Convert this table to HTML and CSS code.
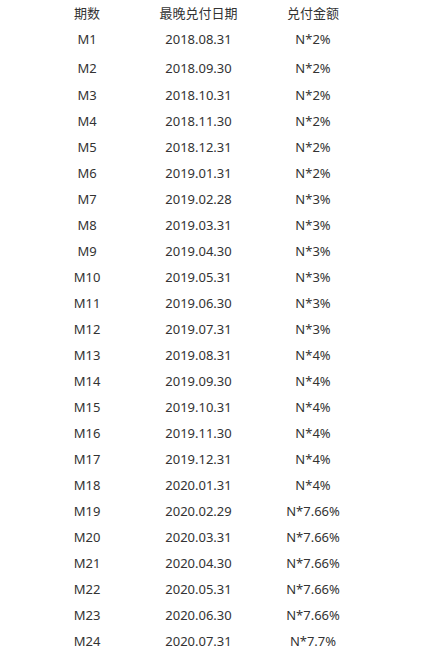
FILE: index.html
```html
<!DOCTYPE html>
<html lang="zh-CN">
<head>
<meta charset="utf-8">
<link rel="stylesheet" href="styles.css">
</head>
<body>
<div class="schedule">
  <div class="row head"><span>期数</span><span>最晚兑付日期</span><span>兑付金额</span></div>
  <div class="row r1"><span>M1</span><span>2018.08.31</span><span>N*2%</span></div>
  <div class="row r2"><span>M2</span><span>2018.09.30</span><span>N*2%</span></div>
  <div class="row"><span>M3</span><span>2018.10.31</span><span>N*2%</span></div>
  <div class="row"><span>M4</span><span>2018.11.30</span><span>N*2%</span></div>
  <div class="row"><span>M5</span><span>2018.12.31</span><span>N*2%</span></div>
  <div class="row"><span>M6</span><span>2019.01.31</span><span>N*2%</span></div>
  <div class="row"><span>M7</span><span>2019.02.28</span><span>N*3%</span></div>
  <div class="row"><span>M8</span><span>2019.03.31</span><span>N*3%</span></div>
  <div class="row"><span>M9</span><span>2019.04.30</span><span>N*3%</span></div>
  <div class="row"><span>M10</span><span>2019.05.31</span><span>N*3%</span></div>
  <div class="row"><span>M11</span><span>2019.06.30</span><span>N*3%</span></div>
  <div class="row"><span>M12</span><span>2019.07.31</span><span>N*3%</span></div>
  <div class="row"><span>M13</span><span>2019.08.31</span><span>N*4%</span></div>
  <div class="row"><span>M14</span><span>2019.09.30</span><span>N*4%</span></div>
  <div class="row"><span>M15</span><span>2019.10.31</span><span>N*4%</span></div>
  <div class="row"><span>M16</span><span>2019.11.30</span><span>N*4%</span></div>
  <div class="row"><span>M17</span><span>2019.12.31</span><span>N*4%</span></div>
  <div class="row"><span>M18</span><span>2020.01.31</span><span>N*4%</span></div>
  <div class="row"><span>M19</span><span>2020.02.29</span><span>N*7.66%</span></div>
  <div class="row"><span>M20</span><span>2020.03.31</span><span>N*7.66%</span></div>
  <div class="row"><span>M21</span><span>2020.04.30</span><span>N*7.66%</span></div>
  <div class="row"><span>M22</span><span>2020.05.31</span><span>N*7.66%</span></div>
  <div class="row"><span>M23</span><span>2020.06.30</span><span>N*7.66%</span></div>
  <div class="row"><span>M24</span><span>2020.07.31</span><span>N*7.7%</span></div>
</div>
</body>
</html>
```

FILE: styles.css
```css
html, body {
  margin: 0;
  padding: 0;
  background: #ffffff;
}
body {
  font-family: "Noto Sans", "Noto Sans CJK SC", sans-serif;
  font-size: 13px;
  color: #333333;
}
.schedule {
  margin-left: 30px;
  width: 343px;
}
.row {
  display: grid;
  grid-template-columns: 114px 109px 120px;
  height: 26px;
  align-items: center;
  text-align: center;
  line-height: 16px;
}
.row.head {
  height: 25px;
}
.row.r1 {
  height: 28px;
}
.row.r2 {
  height: 29px;
}
```
